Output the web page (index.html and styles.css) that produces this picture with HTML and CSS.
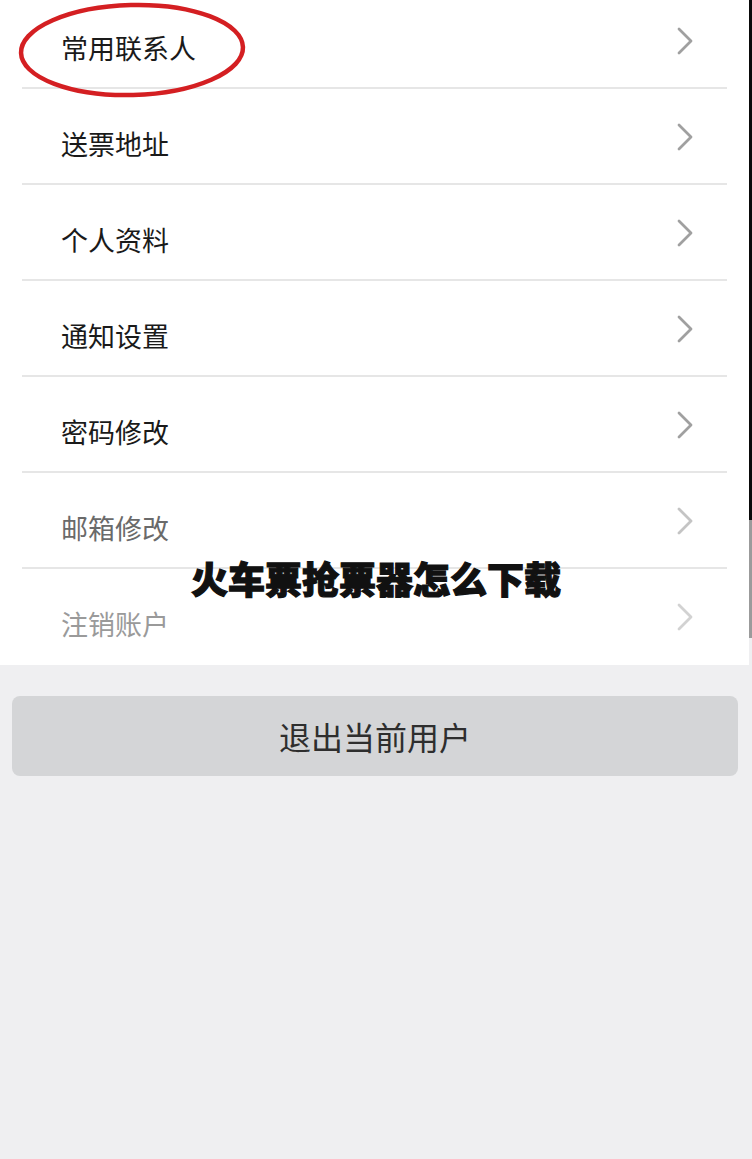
FILE: index.html
```html
<!DOCTYPE html>
<html lang="zh-CN">
<head>
<meta charset="utf-8">
<title>设置</title>
<link rel="stylesheet" href="styles.css">
</head>
<body>
<div class="page">
  <div class="main">
    <ul class="list">
      <li class="row first"><span class="label">常用联系人</span><svg class="chev" viewBox="0 0 16 28"><path d="M2 2 L14 14 L2 26"/></svg></li>
      <li class="row"><span class="label">送票地址</span><svg class="chev" viewBox="0 0 16 28"><path d="M2 2 L14 14 L2 26"/></svg></li>
      <li class="row"><span class="label">个人资料</span><svg class="chev" viewBox="0 0 16 28"><path d="M2 2 L14 14 L2 26"/></svg></li>
      <li class="row"><span class="label">通知设置</span><svg class="chev" viewBox="0 0 16 28"><path d="M2 2 L14 14 L2 26"/></svg></li>
      <li class="row"><span class="label">密码修改</span><svg class="chev" viewBox="0 0 16 28"><path d="M2 2 L14 14 L2 26"/></svg></li>
      <li class="row faded1"><span class="label">邮箱修改</span><svg class="chev" viewBox="0 0 16 28"><path d="M2 2 L14 14 L2 26"/></svg></li>
      <li class="row faded2 last"><span class="label">注销账户</span><svg class="chev" viewBox="0 0 16 28"><path d="M2 2 L14 14 L2 26"/></svg></li>
    </ul>
    <div class="actions">
      <button class="logout">退出当前用户</button>
    </div>
  </div>
  <div class="edge"><div class="edge-dark"></div><div class="edge-gray"></div></div>
  <svg class="circle" viewBox="0 0 240 100"><ellipse cx="120" cy="50" rx="111" ry="45" transform="rotate(-1.5 120 50)"/></svg>
  <h1 class="title">火车票抢票器怎么下载</h1>
</div>
</body>
</html>
```
FILE: styles.css
```css
* { box-sizing: border-box; }
html, body {
  margin: 0;
  padding: 0;
  background: #efeff1;
}
body {
  font-family: "Noto Sans CJK SC", "Noto Sans", sans-serif;
  width: 752px;
  height: 1159px;
  overflow: hidden;
}
.page {
  position: relative;
  display: flex;
  width: 752px;
  min-height: 1159px;
}
.main {
  flex: 1;
}
.list {
  list-style: none;
  margin: 0;
  padding: 0;
  background: #fff;
}
.row {
  display: flex;
  align-items: flex-start;
  justify-content: space-between;
  height: 96px;
  margin: 0 22px;
  padding: 39px 34px 0 39px;
  border-bottom: 2px solid #e6e6e6;
}
.row.first {
  height: 89px;
  padding-top: 32px;
}
.row.last {
  border-bottom: none;
}
.label {
  font-size: 27px;
  line-height: 32px;
  color: #1a1a1a;
}
.chev {
  width: 16px;
  height: 28px;
  margin-top: -5px;
}
.chev path {
  fill: none;
  stroke: #a0a0a0;
  stroke-width: 2.8;
  stroke-linecap: round;
  stroke-linejoin: round;
}
.faded1 .label { color: #6a6a6a; }
.faded2 .label { color: #9a9a9a; }
.faded1 .chev path { stroke: #c4c4c4; }
.faded2 .chev path { stroke: #d2d2d2; }
.actions {
  padding: 31px 11px 0 12px;
}
.logout {
  display: block;
  width: 100%;
  height: 80px;
  border: none;
  border-radius: 8px;
  background: #d4d5d7;
  color: #2e2e2e;
  font-family: "Noto Sans CJK SC", "Noto Sans", sans-serif;
  font-size: 32px;
  padding: 0;
}
.edge {
  width: 3px;
  display: flex;
  flex-direction: column;
}
.edge-dark {
  height: 520px;
  background: #0a0a0a;
}
.edge-gray {
  height: 118px;
  background: #9b9b9b;
}
.circle {
  position: absolute;
  left: 12px;
  top: 0;
  width: 240px;
  height: 100px;
}
.circle ellipse {
  fill: none;
  stroke: #d41f22;
  stroke-width: 4.5;
}
.title {
  position: absolute;
  left: 0;
  right: 0;
  top: 556px;
  margin: 0;
  text-align: center;
  font-size: 37px;
  line-height: 44px;
  font-weight: 900;
  color: #111;
  -webkit-text-stroke: 1.2px #111;
}
```
